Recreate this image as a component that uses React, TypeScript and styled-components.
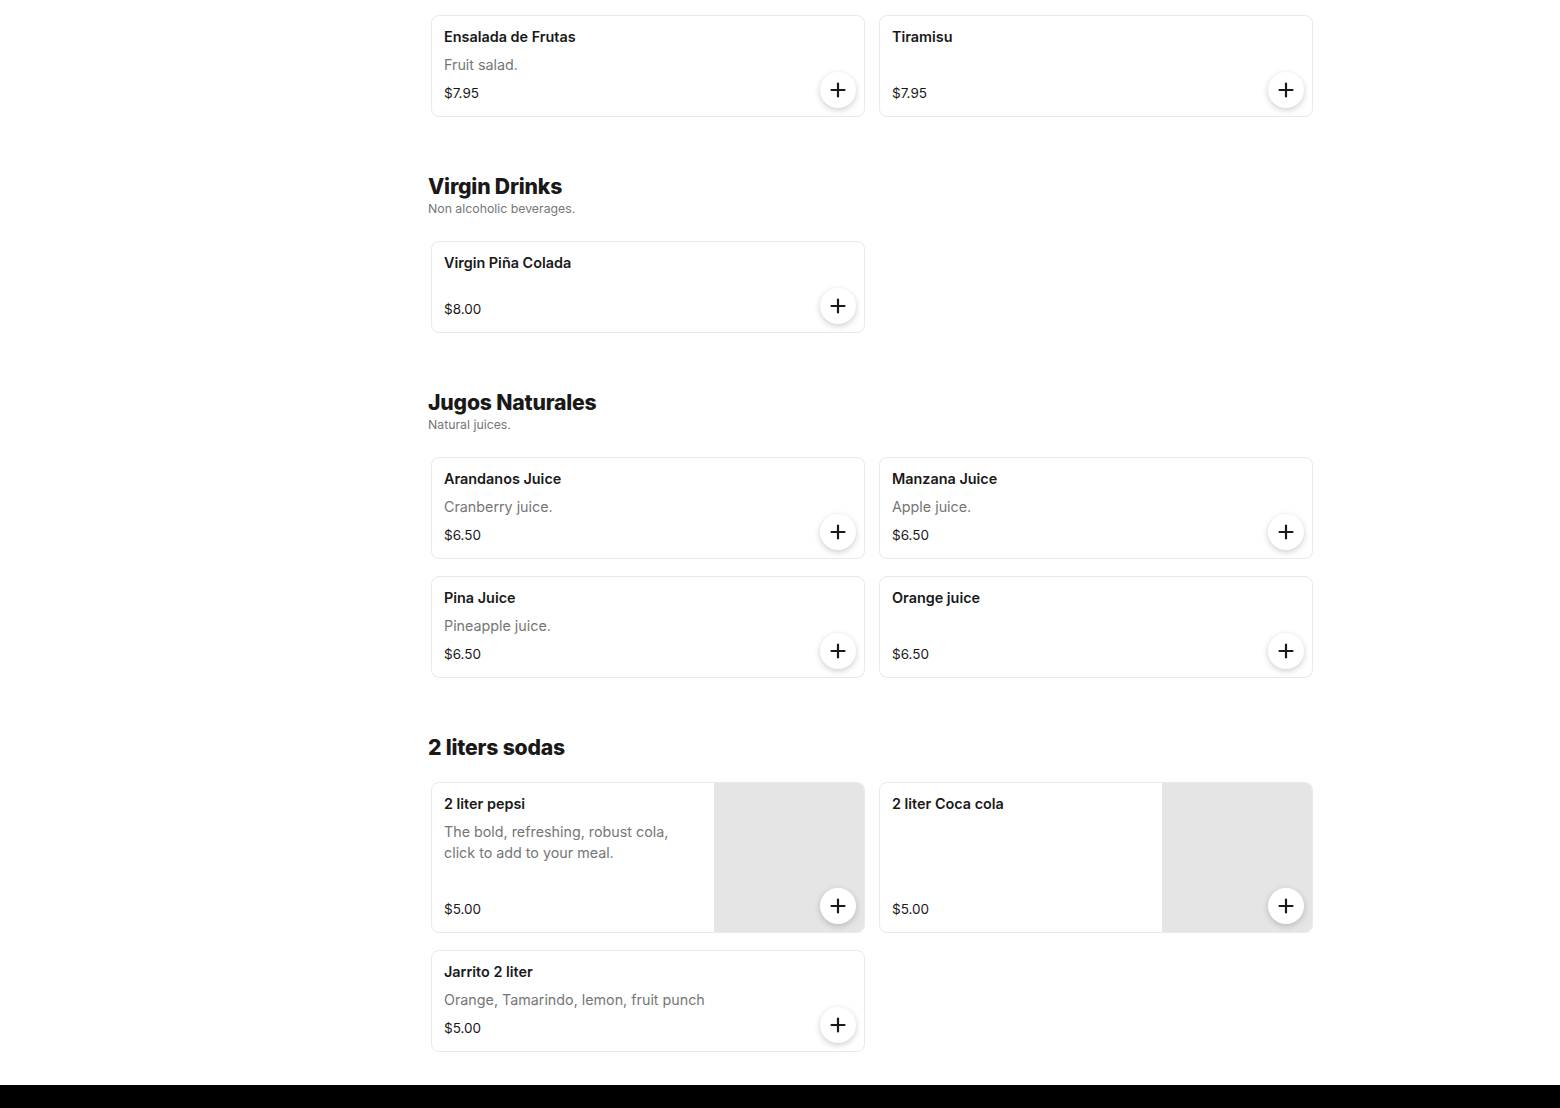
import React from 'react'
import styled, { createGlobalStyle } from 'styled-components'

const GlobalStyle = createGlobalStyle`
  html, body {
    margin: 0;
    padding: 0;
    background: #fff;
    font-family: Inter, "Liberation Sans", Arial, sans-serif;
    color: #191919;
  }
`;

const Main = styled.main`
  width: 888px;
  margin-left: 428px;
  padding-top: 15px;
`;

const Section = styled.section`
  & + & {
    margin-top: 56px;
  }
`;

const SectionHeader = styled.header`
  margin-bottom: 22px;
`;

const SectionTitle = styled.h2`
  margin: 0;
  font-size: 21.2px;
  line-height: 26px;
  font-weight: 800;
  letter-spacing: -0.2px;
`;

const SectionSubtitle = styled.p`
  margin: 2px 0 0;
  padding-bottom: 2px;
  font-size: 12.3px;
  line-height: 16px;
  color: #767676;
`;

const Grid = styled.div`
  display: grid;
  grid-template-columns: 1fr 1fr;
  column-gap: 14px;
  row-gap: 17px;
  padding: 0 3px;
`;

const Card = styled.div<{ $tall?: boolean }>`
  position: relative;
  display: flex;
  min-height: ${(p) => (p.$tall ? '151px' : '92px')};
  border: 1px solid #e9e9e9;
  border-radius: 8px;
  background: #fff;
  box-sizing: border-box;
  overflow: hidden;
`;

const CardBody = styled.div<{ $withImage?: boolean }>`
  flex: 1;
  display: flex;
  flex-direction: column;
  padding: 11px ${(p) => (p.$withImage ? '24px' : '12px')} 13px 12px;
`;

const ItemName = styled.div`
  font-size: 14.4px;
  line-height: 20px;
  font-weight: 600;
`;

const ItemDesc = styled.div`
  margin-top: 7px;
  font-size: 14.3px;
  line-height: 21px;
  color: #767676;
`;

const ItemPrice = styled.div`
  margin-top: auto;
  padding-top: 8px;
  font-size: 13.5px;
  line-height: 20px;
`;

const Thumb = styled.div`
  flex: 0 0 150px;
  background: #e5e5e5;
`;

const AddButton = styled.button`
  position: absolute;
  right: 8px;
  bottom: 8px;
  width: 36px;
  height: 36px;
  padding: 0;
  border: 0;
  border-radius: 50%;
  background: #fff;
  box-shadow: 0 2px 6px rgba(0, 0, 0, 0.2);
  display: flex;
  align-items: center;
  justify-content: center;
  cursor: pointer;
`;

const Footer = styled.footer`
  margin-top: 33px;
  height: 240px;
  background: #000;
`;

type Item = { name: string; desc?: string; price: string; image?: boolean };
type MenuSection = { title?: string; subtitle?: string; items: Item[] };

const sections: MenuSection[] = [
  {
    items: [
      { name: 'Ensalada de Frutas', desc: 'Fruit salad.', price: '$7.95' },
      { name: 'Tiramisu', price: '$7.95' },
    ],
  },
  {
    title: 'Virgin Drinks',
    subtitle: 'Non alcoholic beverages.',
    items: [{ name: 'Virgin Piña Colada', price: '$8.00' }],
  },
  {
    title: 'Jugos Naturales',
    subtitle: 'Natural juices.',
    items: [
      { name: 'Arandanos Juice', desc: 'Cranberry juice.', price: '$6.50' },
      { name: 'Manzana Juice', desc: 'Apple juice.', price: '$6.50' },
      { name: 'Pina Juice', desc: 'Pineapple juice.', price: '$6.50' },
      { name: 'Orange juice', price: '$6.50' },
    ],
  },
  {
    title: '2 liters sodas',
    items: [
      {
        name: '2 liter pepsi',
        desc: 'The bold, refreshing, robust cola, click to add to your meal.',
        price: '$5.00',
        image: true,
      },
      { name: '2 liter Coca cola', price: '$5.00', image: true },
      { name: 'Jarrito 2 liter', desc: 'Orange, Tamarindo, lemon, fruit punch', price: '$5.00' },
    ],
  },
];

function PlusIcon() {
  return (
    <svg width="16" height="16" viewBox="0 0 16 16" fill="none">
      <path d="M8 1.5v13M1.5 8h13" stroke="#191919" strokeWidth="2.2" strokeLinecap="round" />
    </svg>
  );
}

function MenuCard({ item }: { item: Item }) {
  return (
    <Card $tall={item.image}>
      <CardBody $withImage={item.image}>
        <ItemName>{item.name}</ItemName>
        {item.desc && <ItemDesc>{item.desc}</ItemDesc>}
        <ItemPrice>{item.price}</ItemPrice>
      </CardBody>
      {item.image && <Thumb />}
      <AddButton aria-label={`Add ${item.name}`}>
        <PlusIcon />
      </AddButton>
    </Card>
  );
}

export default function App() {
  return (
    <>
      <GlobalStyle />
      <Main>
        {sections.map((section, i) => (
          <Section key={i}>
            {section.title && (
              <SectionHeader>
                <SectionTitle>{section.title}</SectionTitle>
                {section.subtitle && <SectionSubtitle>{section.subtitle}</SectionSubtitle>}
              </SectionHeader>
            )}
            <Grid>
              {section.items.map((item) => (
                <MenuCard key={item.name} item={item} />
              ))}
            </Grid>
          </Section>
        ))}
      </Main>
      <Footer />
    </>
  );
}
